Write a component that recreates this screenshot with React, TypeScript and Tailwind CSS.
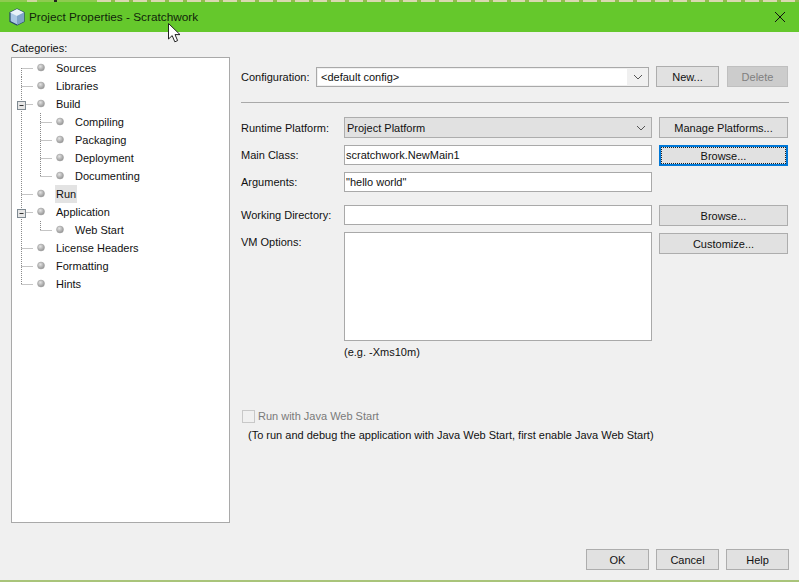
import React from 'react';

const rows = [
  { label: 'Sources', level: 0, last: false },
  { label: 'Libraries', level: 0, last: false },
  { label: 'Build', level: 0, last: false, open: true },
  { label: 'Compiling', level: 1, last: false },
  { label: 'Packaging', level: 1, last: false },
  { label: 'Deployment', level: 1, last: false },
  { label: 'Documenting', level: 1, last: true },
  { label: 'Run', level: 0, last: false, selected: true },
  { label: 'Application', level: 0, last: false, open: true },
  { label: 'Web Start', level: 1, last: true },
  { label: 'License Headers', level: 0, last: false },
  { label: 'Formatting', level: 0, last: false },
  { label: 'Hints', level: 0, last: true },
];

const dots = { stroke: '#8a8a8a', strokeDasharray: '1 1' };

// connector lines, expander and bullet for one row of the tree
const TreeGlyph: React.FC<{ level: number; last: boolean; open?: boolean; first?: boolean }> = ({ level, last, open, first }) => {
  const x = level === 0 ? 9.5 : 28.5;
  return (
    <svg width={level === 0 ? 43 : 62} height={18} className="shrink-0">
      <defs>
        <radialGradient id="bullet" cx="40%" cy="35%" r="70%">
          <stop offset="0%" stopColor="#e4e4e4" />
          <stop offset="100%" stopColor="#8f8f8f" />
        </radialGradient>
      </defs>
      {level === 1 && <line x1={9.5} y1={0} x2={9.5} y2={18} {...dots} />}
      <line x1={x} y1={first ? 9 : 0} x2={x} y2={last ? 9 : 18} {...dots} />
      <line x1={x} y1={9.5} x2={x + 11} y2={9.5} {...dots} />
      {open && (
        <g>
          <rect x={5.5} y={6.5} width={8} height={8} fill="#e6e6e6" stroke="#7f8a92" />
          <line x1={7.5} y1={10.5} x2={11.5} y2={10.5} stroke="#333" />
        </g>
      )}
      <circle cx={x + 19.5} cy={8.5} r={3.5} fill="url(#bullet)" stroke="#a0a0a0" strokeWidth={0.5} />
    </svg>
  );
};

const tones = {
  normal: 'border border-[#adadad] bg-[#e1e1e1] text-[#111]',
  disabled: 'border border-[#bfbfbf] bg-[#cccccc] text-[#808080]',
  focused: 'border-2 border-[#0078d7] bg-[#e1e1e1] text-[#111] outline-1 -outline-offset-3 outline-dotted outline-[#222]',
};

const Button: React.FC<{ children: React.ReactNode; className?: string; tone?: keyof typeof tones }> = ({
  children,
  className,
  tone = 'normal',
}) => (
  <div className={`flex h-[21px] shrink-0 items-center justify-center whitespace-nowrap ${tones[tone]} ${className ?? ''}`}>
    {children}
  </div>
);

const Chevron = () => (
  <svg width={10} height={6} viewBox="0 0 10 6" className="shrink-0">
    <path d="M1 1l4 4 4-4" fill="none" stroke="#555" strokeWidth={1} />
  </svg>
);

const Input: React.FC<{ children?: React.ReactNode; className?: string }> = ({ children, className }) => (
  <div className={`flex h-5 w-[308px] shrink-0 items-center whitespace-nowrap border border-[#a9a9a9] bg-white pl-[1px] text-[#111] ${className ?? ''}`}>
    {children}
  </div>
);

const Label: React.FC<{ children: React.ReactNode }> = ({ children }) => (
  <span className="w-[103px] shrink-0 whitespace-nowrap leading-5">{children}</span>
);

export default function App() {
  return (
    <div
      className="relative flex h-[582px] w-[799px] flex-col overflow-hidden bg-[#f0f0f0] text-[11px] leading-4 text-[#111]"
      style={{ fontFamily: '"Liberation Sans", Arial, sans-serif' }}
    >
      <div className="flex h-[2px] shrink-0 bg-[#8ecb4f]">
        <div className="ml-[27px] w-[10px] bg-[#cfd6a0]" />
        <div className="ml-[17px] w-[3px] bg-[#222]" />
        <div className="ml-[40px] flex-1 bg-[repeating-linear-gradient(90deg,#d9d8b0_0px,#d9d8b0_14px,#8fbb4c_14px,#8fbb4c_18px)]" />
      </div>
      {/* title bar */}
      <div className="flex h-[30px] shrink-0 items-center bg-[#65c82c] pl-[8px] pr-[13px]">
        <svg width={18} height={18} viewBox="0 0 18 18" className="shrink-0">
          <path d="M9 1l7 3.5v9L9 17l-7-3.5v-9z" fill="#aac8e4" stroke="#24466a" strokeWidth={1.2} strokeLinejoin="round" />
          <path d="M9 1l7 3.5L9 8 2 4.5z" fill="#e8f1f8" />
          <path d="M9 8v9l7-3.5v-9z" fill="#7fa4c8" />
        </svg>
        <span className="ml-[3px] text-[11.8px] text-[#10240a]">Project Properties - Scratchwork</span>
        <svg width={12} height={12} viewBox="0 0 12 12" className="ml-auto">
          <path d="M1 1l10 10M11 1L1 11" stroke="#111" strokeWidth={1} />
        </svg>
      </div>

      <div className="flex min-h-0 flex-1">
        {/* categories */}
        <div className="ml-[11px] w-[219px] shrink-0">
          <div className="mt-[7px] h-[18px] leading-[18px]">Categories:</div>
          <div className="h-[466px] border border-[#a9a9a9] bg-white pt-[1px]">
            {rows.map((r, i) => (
              <div key={r.label} className="flex h-[18px] items-center">
                <TreeGlyph level={r.level} last={r.last} open={r.open} first={i === 0} />
                <span className={`px-[1px] leading-[18px] ${r.selected ? 'bg-[#e3e3e3]' : ''}`}>{r.label}</span>
              </div>
            ))}
          </div>
        </div>

        {/* run settings */}
        <div className="ml-[11px] flex w-[548px] flex-col pt-[34px]">
          <div className="flex items-center">
            <span className="w-[75px] shrink-0 whitespace-nowrap">Configuration:</span>
            <div className="flex h-5 w-[333px] shrink-0 items-center border border-[#a9a9a9] bg-[#f0f0f0] pr-[5px]">
              <span className="mx-px flex h-4 flex-1 items-center bg-white pl-[3px]">&lt;default config&gt;</span>
              <span className="ml-[5px]">
                <Chevron />
              </span>
            </div>
            <Button className="ml-[7px] w-[63px]">New...</Button>
            <Button tone="disabled" className="ml-[8px] w-[61px]">Delete</Button>
          </div>

          <div className="mt-[15px] h-px bg-[#a9a9a9]" />

          <div className="mt-[14px] flex items-center">
            <Label>Runtime Platform:</Label>
            <div className="flex h-[21px] w-[308px] shrink-0 items-center border border-[#adadad] bg-[#e1e1e1] pl-[2px] pr-[5px]">
              <span className="flex-1">Project Platform</span>
              <Chevron />
            </div>
            <Button className="ml-[7px] w-[129px]">Manage Platforms...</Button>
          </div>

          <div className="mt-[7px] flex items-start">
            <Label>Main Class:</Label>
            <Input>scratchwork.NewMain1</Input>
            <Button tone="focused" className="ml-[7px] w-[129px]">Browse...</Button>
          </div>

          <div className="mt-[6px] flex items-start">
            <Label>Arguments:</Label>
            <Input>"hello world"</Input>
          </div>

          <div className="mt-[13px] flex items-start">
            <Label>Working Directory:</Label>
            <Input />
            <Button className="ml-[7px] w-[129px]">Browse...</Button>
          </div>

          <div className="mt-[6px] flex items-start">
            <Label>VM Options:</Label>
            <Input className="h-[109px]" />
            <Button className="ml-[7px] mt-px w-[129px]">Customize...</Button>
          </div>

          <div className="ml-[103px] mt-[3px]">(e.g. -Xms10m)</div>

          <div className="ml-px mt-[48px] flex items-center">
            <div className="h-[13px] w-[13px] shrink-0 border border-[#c8c8c8] bg-[#f0f0f0]" />
            <span className="ml-[3px] text-[#7a7a7a]">Run with Java Web Start</span>
          </div>
          <div className="ml-[7px] mt-[3px] whitespace-nowrap">(To run and debug the application with Java Web Start, first enable Java Web Start)</div>

          <div className="mt-auto mb-[10px] flex justify-end gap-[7px]">
            <Button className="w-[63px]">OK</Button>
            <Button className="w-[63px]">Cancel</Button>
            <Button className="w-[63px]">Help</Button>
          </div>
        </div>
      </div>
      <div className="h-[2px] shrink-0 bg-[#a9c47a]" />

      {/* mouse pointer over the title bar */}
      <svg width={14} height={20} viewBox="0 0 14 20" className="absolute left-[168px] top-[23px]">
        <path d="M.5.5v15.5l3.7-3.4 2.6 6.2 2.8-1.2-2.6-6h5z" fill="#fff" stroke="#222" strokeWidth={1} strokeLinejoin="round" />
      </svg>
    </div>
  );
}
